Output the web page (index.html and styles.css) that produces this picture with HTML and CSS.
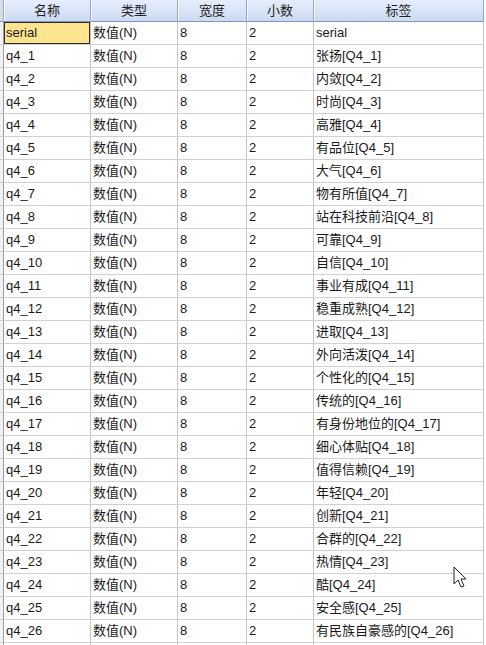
FILE: index.html
```html
<!DOCTYPE html>
<html lang="zh">
<head>
<meta charset="utf-8">
<link rel="stylesheet" href="styles.css">
</head>
<body>
<div class="sheet">
  <div class="row head">
    <div class="c edge"></div>
    <div class="c">名称</div>
    <div class="c">类型</div>
    <div class="c">宽度</div>
    <div class="c">小数</div>
    <div class="c">标签</div>
  </div>
  <div class="row"><div class="c edge"></div><div class="c sel">serial</div><div class="c">数值(N)</div><div class="c">8</div><div class="c">2</div><div class="c">serial</div></div>
  <div class="row"><div class="c edge"></div><div class="c">q4_1</div><div class="c">数值(N)</div><div class="c">8</div><div class="c">2</div><div class="c">张扬[Q4_1]</div></div>
  <div class="row"><div class="c edge"></div><div class="c">q4_2</div><div class="c">数值(N)</div><div class="c">8</div><div class="c">2</div><div class="c">内敛[Q4_2]</div></div>
  <div class="row"><div class="c edge"></div><div class="c">q4_3</div><div class="c">数值(N)</div><div class="c">8</div><div class="c">2</div><div class="c">时尚[Q4_3]</div></div>
  <div class="row"><div class="c edge"></div><div class="c">q4_4</div><div class="c">数值(N)</div><div class="c">8</div><div class="c">2</div><div class="c">高雅[Q4_4]</div></div>
  <div class="row"><div class="c edge"></div><div class="c">q4_5</div><div class="c">数值(N)</div><div class="c">8</div><div class="c">2</div><div class="c">有品位[Q4_5]</div></div>
  <div class="row"><div class="c edge"></div><div class="c">q4_6</div><div class="c">数值(N)</div><div class="c">8</div><div class="c">2</div><div class="c">大气[Q4_6]</div></div>
  <div class="row"><div class="c edge"></div><div class="c">q4_7</div><div class="c">数值(N)</div><div class="c">8</div><div class="c">2</div><div class="c">物有所值[Q4_7]</div></div>
  <div class="row"><div class="c edge"></div><div class="c">q4_8</div><div class="c">数值(N)</div><div class="c">8</div><div class="c">2</div><div class="c">站在科技前沿[Q4_8]</div></div>
  <div class="row"><div class="c edge"></div><div class="c">q4_9</div><div class="c">数值(N)</div><div class="c">8</div><div class="c">2</div><div class="c">可靠[Q4_9]</div></div>
  <div class="row"><div class="c edge"></div><div class="c">q4_10</div><div class="c">数值(N)</div><div class="c">8</div><div class="c">2</div><div class="c">自信[Q4_10]</div></div>
  <div class="row"><div class="c edge"></div><div class="c">q4_11</div><div class="c">数值(N)</div><div class="c">8</div><div class="c">2</div><div class="c">事业有成[Q4_11]</div></div>
  <div class="row"><div class="c edge"></div><div class="c">q4_12</div><div class="c">数值(N)</div><div class="c">8</div><div class="c">2</div><div class="c">稳重成熟[Q4_12]</div></div>
  <div class="row"><div class="c edge"></div><div class="c">q4_13</div><div class="c">数值(N)</div><div class="c">8</div><div class="c">2</div><div class="c">进取[Q4_13]</div></div>
  <div class="row"><div class="c edge"></div><div class="c">q4_14</div><div class="c">数值(N)</div><div class="c">8</div><div class="c">2</div><div class="c">外向活泼[Q4_14]</div></div>
  <div class="row"><div class="c edge"></div><div class="c">q4_15</div><div class="c">数值(N)</div><div class="c">8</div><div class="c">2</div><div class="c">个性化的[Q4_15]</div></div>
  <div class="row"><div class="c edge"></div><div class="c">q4_16</div><div class="c">数值(N)</div><div class="c">8</div><div class="c">2</div><div class="c">传统的[Q4_16]</div></div>
  <div class="row"><div class="c edge"></div><div class="c">q4_17</div><div class="c">数值(N)</div><div class="c">8</div><div class="c">2</div><div class="c">有身份地位的[Q4_17]</div></div>
  <div class="row"><div class="c edge"></div><div class="c">q4_18</div><div class="c">数值(N)</div><div class="c">8</div><div class="c">2</div><div class="c">细心体贴[Q4_18]</div></div>
  <div class="row"><div class="c edge"></div><div class="c">q4_19</div><div class="c">数值(N)</div><div class="c">8</div><div class="c">2</div><div class="c">值得信赖[Q4_19]</div></div>
  <div class="row"><div class="c edge"></div><div class="c">q4_20</div><div class="c">数值(N)</div><div class="c">8</div><div class="c">2</div><div class="c">年轻[Q4_20]</div></div>
  <div class="row"><div class="c edge"></div><div class="c">q4_21</div><div class="c">数值(N)</div><div class="c">8</div><div class="c">2</div><div class="c">创新[Q4_21]</div></div>
  <div class="row"><div class="c edge"></div><div class="c">q4_22</div><div class="c">数值(N)</div><div class="c">8</div><div class="c">2</div><div class="c">合群的[Q4_22]</div></div>
  <div class="row"><div class="c edge"></div><div class="c">q4_23</div><div class="c">数值(N)</div><div class="c">8</div><div class="c">2</div><div class="c">热情[Q4_23]</div></div>
  <div class="row"><div class="c edge"></div><div class="c">q4_24</div><div class="c">数值(N)</div><div class="c">8</div><div class="c">2</div><div class="c">酷[Q4_24]</div></div>
  <div class="row"><div class="c edge"></div><div class="c">q4_25</div><div class="c">数值(N)</div><div class="c">8</div><div class="c">2</div><div class="c">安全感[Q4_25]</div></div>
  <div class="row"><div class="c edge"></div><div class="c">q4_26</div><div class="c">数值(N)</div><div class="c">8</div><div class="c">2</div><div class="c">有民族自豪感的[Q4_26]</div></div>
  <div class="row"><div class="c edge"></div><div class="c"></div><div class="c"></div><div class="c"></div><div class="c"></div><div class="c"></div></div>
</div>
<svg class="cursor" width="14" height="24" viewBox="0 0 14 24">
  <path d="M1 1 L1 18 L5 14 L8 21 L11 20 L8 13 L13 13 Z" fill="#fff" stroke="#222" stroke-width="1" stroke-linejoin="round"/>
</svg>
</body>
</html>
```
FILE: styles.css
```css
html, body {
  margin: 0;
  padding: 0;
  background: #ffffff;
}
body {
  font-family: "Liberation Sans", "Noto Sans CJK SC", sans-serif;
  font-size: 13px;
  color: #1a1a1a;
  overflow: hidden;
  height: 645px;
  position: relative;
}
.sheet {
  width: 484px;
}
.row {
  display: grid;
  grid-template-columns: 4px 87px 87px 69px 67px 170px;
  height: 23px;
}
.c {
  box-sizing: border-box;
  border-right: 1px solid #c3c6cc;
  border-bottom: 1px solid #cfd1d4;
  padding: 0 2px;
  line-height: 22px;
  white-space: nowrap;
  overflow: hidden;
}
.c.edge {
  padding: 0;
  background: #f2f2f2;
  border-right-color: #9a9ea6;
}
.row.head {
  height: 22px;
}
.head .c {
  background: linear-gradient(#e6eefb, #cbdaf2);
  border-right: 1px solid #97a8c4;
  border-bottom: 1px solid #8296b8;
  box-shadow: inset 1px 0 0 #f7faff;
  text-align: center;
  line-height: 21px;
  color: #222;
}
.head .c.edge {
  background: #d3dcea;
  box-shadow: none;
}
.c.sel {
  background: #fde590;
  box-shadow: inset 0 0 0 1px #2c2c2c;
}
.cursor {
  position: absolute;
  left: 453px;
  top: 566px;
}
```
